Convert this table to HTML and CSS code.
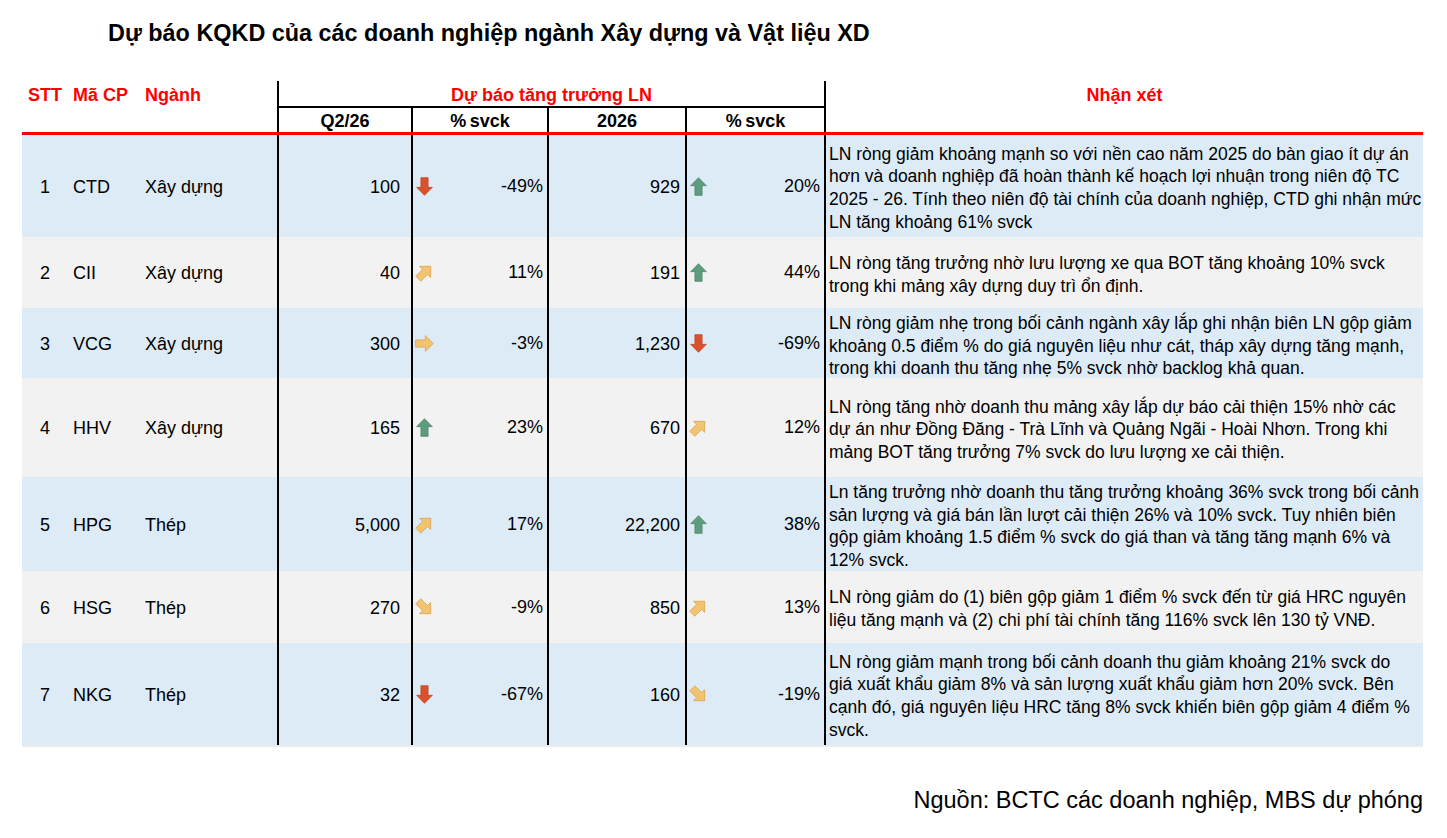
FILE: index.html
```html
<!DOCTYPE html>
<html lang="vi">
<head>
<meta charset="utf-8">
<title>Dự báo KQKD</title>
<link rel="stylesheet" href="styles.css">
</head>
<body>
<svg class="defs" width="0" height="0" aria-hidden="true">
  <symbol id="arrow" viewBox="0 0 16 18">
    <path d="M8 0.6 L15.4 8.2 L11.4 8.2 L11.4 17.4 L4.6 17.4 L4.6 8.2 L0.6 8.2 Z"/>
  </symbol>
</svg>
<div class="page">
  <h1 class="title">Dự báo KQKD của các doanh nghiệp ngành Xây dựng và Vật liệu XD</h1>
  <div class="table">
    <div class="head">
      <div class="h stt">STT</div>
      <div class="h ma">Mã CP</div>
      <div class="h nganh">Ngành</div>
      <div class="h group">Dự báo tăng trưởng LN</div>
      <div class="h note">Nhận xét</div>
      <div class="sub s4">Q2/26</div>
      <div class="sub s5">%&#8201;svck</div>
      <div class="sub s6">2026</div>
      <div class="sub s7">%&#8201;svck</div>
    </div>

    <div class="row r1 blue">
      <div class="c stt">1</div>
      <div class="c ma">CTD</div>
      <div class="c nganh">Xây dựng</div>
      <div class="c num q">100</div>
      <div class="c pct"><svg class="arr down"><use href="#arrow"/></svg><span>-49%</span></div>
      <div class="c num y">929</div>
      <div class="c pct"><svg class="arr up"><use href="#arrow"/></svg><span>20%</span></div>
      <div class="c note">LN ròng giảm khoảng mạnh so với nền cao năm 2025 do bàn giao ít dự án<br>hơn và doanh nghiệp đã hoàn thành kế hoạch lợi nhuận trong niên độ TC<br>2025 - 26. Tính theo niên độ tài chính của doanh nghiệp, CTD ghi nhận mức<br>LN tăng khoảng 61% svck</div>
    </div>

    <div class="row r2 gray">
      <div class="c stt">2</div>
      <div class="c ma">CII</div>
      <div class="c nganh">Xây dựng</div>
      <div class="c num q">40</div>
      <div class="c pct"><svg class="arr ur"><use href="#arrow"/></svg><span>11%</span></div>
      <div class="c num y">191</div>
      <div class="c pct"><svg class="arr up"><use href="#arrow"/></svg><span>44%</span></div>
      <div class="c note">LN ròng tăng trưởng nhờ lưu lượng xe qua BOT tăng khoảng 10% svck<br>trong khi mảng xây dựng duy trì ổn định.</div>
    </div>

    <div class="row r3 blue">
      <div class="c stt">3</div>
      <div class="c ma">VCG</div>
      <div class="c nganh">Xây dựng</div>
      <div class="c num q">300</div>
      <div class="c pct"><svg class="arr right"><use href="#arrow"/></svg><span>-3%</span></div>
      <div class="c num y">1,230</div>
      <div class="c pct"><svg class="arr down"><use href="#arrow"/></svg><span>-69%</span></div>
      <div class="c note">LN ròng giảm nhẹ trong bối cảnh ngành xây lắp ghi nhận biên LN gộp giảm<br>khoảng 0.5 điểm % do giá nguyên liệu như cát, tháp xây dựng tăng mạnh,<br>trong khi doanh thu tăng nhẹ 5% svck nhờ backlog khả quan.</div>
    </div>

    <div class="row r4 gray">
      <div class="c stt">4</div>
      <div class="c ma">HHV</div>
      <div class="c nganh">Xây dựng</div>
      <div class="c num q">165</div>
      <div class="c pct"><svg class="arr up"><use href="#arrow"/></svg><span>23%</span></div>
      <div class="c num y">670</div>
      <div class="c pct"><svg class="arr ur"><use href="#arrow"/></svg><span>12%</span></div>
      <div class="c note">LN ròng tăng nhờ doanh thu mảng xây lắp dự báo cải thiện 15% nhờ các<br>dự án như Đồng Đăng - Trà Lĩnh và Quảng Ngãi - Hoài Nhơn. Trong khi<br>mảng BOT tăng trưởng 7% svck do lưu lượng xe cải thiện.</div>
    </div>

    <div class="row r5 blue">
      <div class="c stt">5</div>
      <div class="c ma">HPG</div>
      <div class="c nganh">Thép</div>
      <div class="c num q">5,000</div>
      <div class="c pct"><svg class="arr ur"><use href="#arrow"/></svg><span>17%</span></div>
      <div class="c num y">22,200</div>
      <div class="c pct"><svg class="arr up"><use href="#arrow"/></svg><span>38%</span></div>
      <div class="c note">Ln tăng trưởng nhờ doanh thu tăng trưởng khoảng 36% svck trong bối cảnh<br>sản lượng và giá bán lần lượt cải thiện 26% và 10% svck. Tuy nhiên biên<br>gộp giảm khoảng 1.5 điểm % svck do giá than và tăng tăng mạnh 6% và<br>12% svck.</div>
    </div>

    <div class="row r6 gray">
      <div class="c stt">6</div>
      <div class="c ma">HSG</div>
      <div class="c nganh">Thép</div>
      <div class="c num q">270</div>
      <div class="c pct"><svg class="arr dr"><use href="#arrow"/></svg><span>-9%</span></div>
      <div class="c num y">850</div>
      <div class="c pct"><svg class="arr ur"><use href="#arrow"/></svg><span>13%</span></div>
      <div class="c note">LN ròng giảm do (1) biên gộp giảm 1 điểm % svck đến từ giá HRC nguyên<br>liệu tăng mạnh và (2) chi phí tài chính tăng 116% svck lên 130 tỷ VNĐ.</div>
    </div>

    <div class="row r7 blue last">
      <div class="c stt">7</div>
      <div class="c ma">NKG</div>
      <div class="c nganh">Thép</div>
      <div class="c num q">32</div>
      <div class="c pct"><svg class="arr down"><use href="#arrow"/></svg><span>-67%</span></div>
      <div class="c num y">160</div>
      <div class="c pct"><svg class="arr dr"><use href="#arrow"/></svg><span>-19%</span></div>
      <div class="c note">LN ròng giảm mạnh trong bối cảnh doanh thu giảm khoảng 21% svck do<br>giá xuất khẩu giảm 8% và sản lượng xuất khẩu giảm hơn 20% svck. Bên<br>cạnh đó, giá nguyên liệu HRC tăng 8% svck khiến biên gộp giảm 4 điểm %<br>svck.</div>
    </div>
  </div>
  <div class="source">Nguồn: BCTC các doanh nghiệp, MBS dự phóng</div>
</div>
</body>
</html>
```

FILE: styles.css
```css
* { box-sizing: border-box; }

body {
  margin: 0;
  background: #ffffff;
  color: #000000;
  font-family: "Liberation Sans", Arial, sans-serif;
}

.defs { position: absolute; width: 0; height: 0; overflow: hidden; }

.page {
  width: 1447px;
  padding: 0 24px 0 22px;
}

.title {
  margin: 0;
  height: 81px;
  padding: 21px 0 0 86px;
  font-size: 23.4px;
  line-height: 24px;
  font-weight: bold;
}

.head,
.row {
  display: grid;
  grid-template-columns: 46px 72px 137px 134px 136px 138px 139px 599px;
}

/* ---------- header ---------- */
.head {
  grid-template-rows: 27px 24px;
  border-bottom: 3px solid #ff0000;
}

.h {
  display: flex;
  align-items: center;
  color: #ff0000;
  font-weight: bold;
  font-size: 18px;
  grid-row: 1;
  padding-top: 2px;
}

.h.stt { grid-column: 1; justify-content: center; }
.h.ma { grid-column: 2; padding-left: 5px; }
.h.nganh { grid-column: 3; padding-left: 5px; }

.h.group {
  grid-column: 4 / 8;
  justify-content: center;
  border-left: 2px solid #000;
  border-bottom: 2px solid #000;
  padding-top: 4px;
}

.h.note {
  grid-column: 8;
  grid-row: 1 / 3;
  align-items: flex-start;
  justify-content: center;
  border-left: 2px solid #000;
  line-height: 27px;
  padding-top: 1px;
}

.sub {
  grid-row: 2;
  display: flex;
  align-items: center;
  justify-content: center;
  font-weight: bold;
  font-size: 18px;
  border-left: 2px solid #000;
  padding-top: 2px;
}
.sub.s4 { grid-column: 4; }
.sub.s5 { grid-column: 5; }
.sub.s6 { grid-column: 6; }
.sub.s7 { grid-column: 7; }

/* ---------- body rows ---------- */
.blue { background: #ddebf7; }
.gray { background: #f2f2f2; }

.r1 { height: 102px; }
.r2 { height: 71px; }
.r3 { height: 70px; }
.r4 { height: 99px; }
.r5 { height: 94px; }
.r6 { height: 72px; }
.r7 { height: 104px; }

.last { border-bottom: 2px solid #ececec; }

.c {
  display: flex;
  align-items: center;
  font-size: 18px;
  white-space: nowrap;
  padding-top: 2px;
}

.c.stt { justify-content: center; }
.c.ma { padding-left: 5px; }
.c.nganh { padding-left: 5px; }

.c.num {
  justify-content: flex-end;
  border-left: 2px solid #000;
}
.c.num.q { padding-right: 11px; }
.c.num.y { padding-right: 5px; }

.c.pct {
  justify-content: space-between;
  border-left: 2px solid #000;
  padding: 0 4px 0 3px;
}

.c.note {
  border-left: 2px solid #000;
  padding-left: 3px;
  padding-top: 4px;
  font-size: 17.5px;
  line-height: 22.6px;
}

/* ---------- arrows ---------- */
.arr {
  width: 17px;
  height: 19px;
  flex: none;
  stroke-width: 0.7;
}
.arr.up { fill: #5d9c7c; stroke: #4b8868; }
.arr.down { fill: #d9522d; stroke: #c2441f; transform: rotate(180deg); }
.arr.ur { fill: #f2c472; stroke: #d9a24a; transform: rotate(45deg); }
.arr.right { fill: #f2c472; stroke: #d9a24a; transform: rotate(90deg); }
.arr.dr { fill: #f2c472; stroke: #d9a24a; transform: rotate(135deg); }

/* ---------- footer ---------- */
.source {
  margin-top: 39px;
  text-align: right;
  font-size: 23.5px;
  line-height: 28px;
}
```
